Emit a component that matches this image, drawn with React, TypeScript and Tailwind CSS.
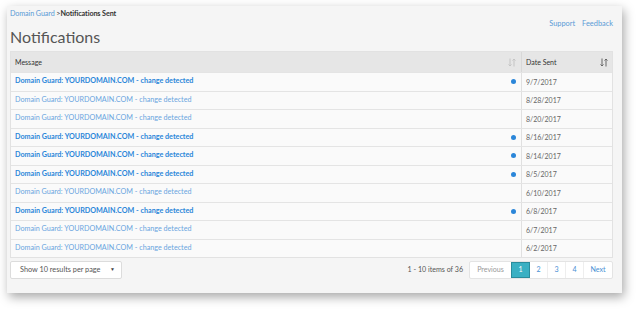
import React from 'react';

const rows = [
  { date: '9/7/2017', unread: true },
  { date: '8/28/2017', unread: false },
  { date: '8/20/2017', unread: false },
  { date: '8/16/2017', unread: true },
  { date: '8/14/2017', unread: true },
  { date: '8/5/2017', unread: true },
  { date: '6/10/2017', unread: false },
  { date: '6/8/2017', unread: true },
  { date: '6/7/2017', unread: false },
  { date: '6/2/2017', unread: false },
];

function SortIcon({ active }: { active?: boolean }) {
  const c = active ? '#666' : '#c4c4c4';
  return (
    <svg width="8" height="9" viewBox="0 0 8 9" fill="none" stroke={c} strokeWidth="1">
      <path d="M2 0.5v7.5M0.5 6.5l1.5 1.5l1.5-1.5" />
      <path d="M6 8.5v-7.5M4.5 2.5l1.5-1.5l1.5 1.5" />
    </svg>
  );
}

export default function App() {
  return (
    <div className="w-[640px] h-[311px] bg-white overflow-hidden" style={{ fontFamily: 'Lato, "Open Sans", sans-serif' }}>
      <div className="ml-[7px] mt-[6px] w-[615px] h-[287px] bg-[#f5f5f5] shadow-[2px_4px_10px_rgba(0,0,0,0.35)] pl-[3px] pr-[9px]">
        <div className="flex justify-between">
          <div>
            <div className="pt-[4px] text-[7.2px] leading-[8px] text-[#333] tracking-[-0.1px]">
              <span className="text-[#5b9bd5]">Domain Guard</span> &gt;<span className="font-bold">Notifications Sent</span>
            </div>
            <h1 className="mt-[10px] text-[16px] leading-[18px] text-[#555]">Notifications</h1>
          </div>
          <div className="pt-[13px] flex gap-[7px] text-[7.4px] leading-[10px] text-[#5b9bd5]">
            <span>Support</span>
            <span>Feedback</span>
          </div>
        </div>

        <div className="mt-[5px] border border-[#e2e2e2]">
          <div className="flex h-[20px] bg-[#e6e6e6] text-[#333] text-[7px]">
            <div className="flex-1 flex items-center justify-between pl-[4px] pr-[5px]">
              <span>Message</span>
              <SortIcon />
            </div>
            <div className="w-[91px] flex items-center justify-between border-l border-[#d8d8d8] pl-[4px] pr-[4px]">
              <span>Date Sent</span>
              <SortIcon active />
            </div>
          </div>
          {rows.map((r, i) => (
            <div key={i} className="flex h-[18.5px] bg-[#fafafa] border-t border-[#e4e4e4]">
              <div className="flex-1 flex items-center justify-between pl-[4px] pr-[5px] text-[7.2px]">
                <span className={r.unread ? 'font-bold text-[#2b86d9]' : 'text-[#6aa5e0]'}>
                  Domain Guard: YOURDOMAIN.COM - change detected
                </span>
                {r.unread && <span className="w-[5px] h-[5px] rounded-full bg-[#2b86d9]" />}
              </div>
              <div className="w-[91px] flex items-center border-l border-[#e0e0e0] pl-[4px] text-[#666] text-[7px]">
                {r.date}
              </div>
            </div>
          ))}
        </div>

        <div className="mt-[3px] flex items-center justify-between">
          <div className="w-[112px] h-[18px] bg-white border border-[#dcdcdc] rounded-[2px] flex items-center justify-between pl-[9px] pr-[6px] text-[7.3px] text-[#555]">
            <span>Show 10 results per page</span>
            <span className="text-[5px] text-[#444]">▼</span>
          </div>
          <div className="flex items-center gap-[6px] text-[7.1px]">
            <span className="text-[#555]">1 - 10 items of 36</span>
            <div className="flex h-[18px] bg-white border border-[#e4e4e4] rounded-[2px]">
              <span className="w-[41px] flex items-center justify-center text-[#999]">Previous</span>
              <span className="w-[19px] flex items-center justify-center bg-[#3ab0c3] border border-[#2a8c9c] text-white">1</span>
              <span className="w-[18px] flex items-center justify-center border-r border-[#eee] text-[#4a8fd4]">2</span>
              <span className="w-[18px] flex items-center justify-center border-r border-[#eee] text-[#4a8fd4]">3</span>
              <span className="w-[18px] flex items-center justify-center border-r border-[#eee] text-[#4a8fd4]">4</span>
              <span className="w-[28px] flex items-center justify-center text-[#4a8fd4]">Next</span>
            </div>
          </div>
        </div>
      </div>
    </div>
  );
}
